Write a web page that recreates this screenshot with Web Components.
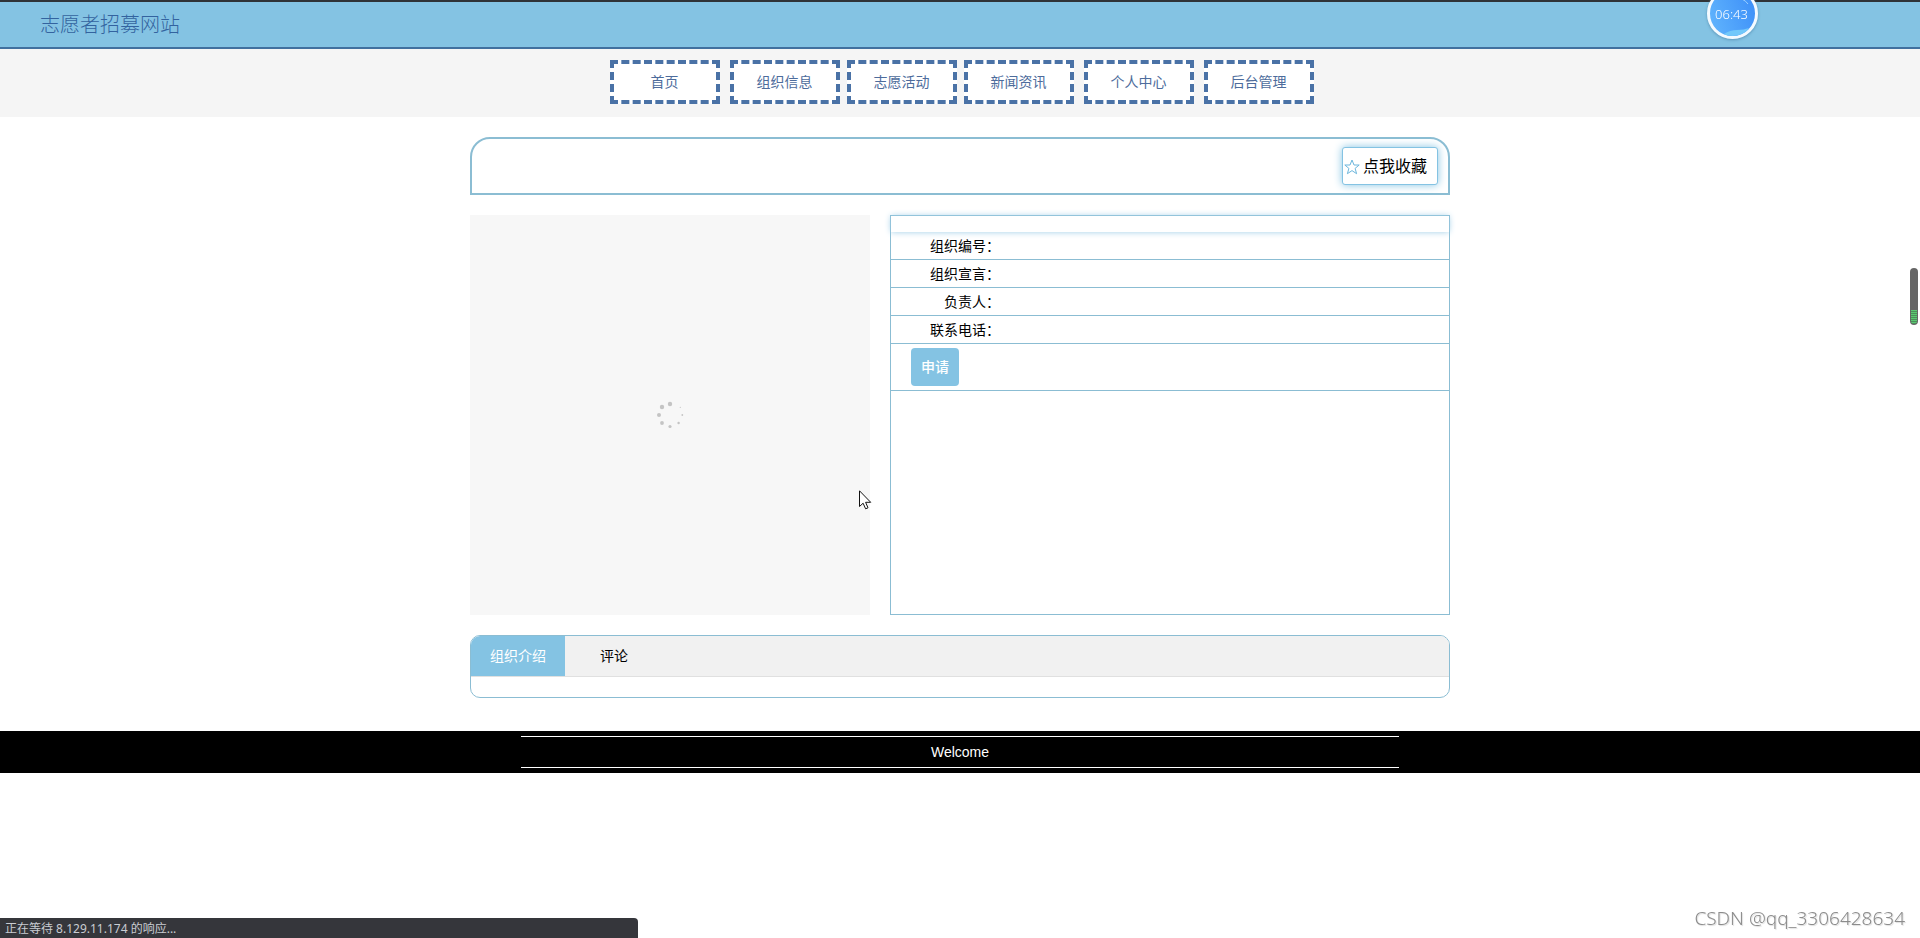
<!DOCTYPE html>
<html lang="zh-CN">
<head>
<meta charset="utf-8">
<title>志愿者招募网站</title>
<style>
  :root {
    --sky: #84c3e3;
    --navy: #4a72a6;
    --line: #8bbdd3;
    --glow: 0 0 8px #84c3e3;
  }
  body {
    margin: 0;
    background: #fff;
    color: #000;
    font: 14px/20px "Liberation Sans", "Noto Sans CJK SC", sans-serif;
  }
</style>
</head>
<body>
<volunteer-page></volunteer-page>

<script>
const define = (name, html) => {
  const template = document.createElement('template');
  template.innerHTML = html;
  customElements.define(name, class extends HTMLElement {
    constructor() {
      super();
      this.attachShadow({ mode: 'open' }).append(template.content.cloneNode(true));
    }
  });
};

define('site-header', `
  <style>
    :host { display: block; background: var(--sky); border-top: 2px solid #2f3337; border-bottom: 2px solid #41709f; padding: 1px 40px 0; }
    h1 { margin: 0; font-size: 20px; line-height: 44px; font-weight: 300; color: #33639f; }
  </style>
  <header><h1><slot></slot></h1></header>
`);

define('nav-link', `
  <style>
    :host { display: block; }
    a { display: block; box-sizing: border-box; width: 110px; line-height: 36px; border: 4px dashed var(--navy); background: #fff; color: #4d6c9c; text-align: center; text-decoration: none; }
  </style>
  <a href="#"><slot></slot></a>
`);

define('site-nav', `
  <style>
    :host { display: block; background: #f5f5f5; padding: 11px 0 13px; }
    nav { display: flex; justify-content: center; gap: 10px; padding-left: 3px; }
    .group { display: flex; gap: 7px; }
  </style>
  <nav>
    <nav-link>首页</nav-link>
    <div class="group">
      <nav-link>组织信息</nav-link>
      <nav-link>志愿活动</nav-link>
      <nav-link>新闻资讯</nav-link>
    </div>
    <nav-link>个人中心</nav-link>
    <nav-link>后台管理</nav-link>
  </nav>
`);

define('favorite-bar', `
  <style>
    :host { display: flex; justify-content: flex-end; padding: 8px 10px; border: 2px solid var(--line); border-radius: 20px 20px 0 0; }
    button { display: flex; align-items: center; gap: 3px; height: 38px; padding: 1px 10px 0 1px; background: #fff; border: 1px solid var(--sky); border-radius: 3px; box-shadow: var(--glow); font: inherit; font-size: 16px; color: #000; }
    svg { display: block; width: 16px; height: 16px; }
  </style>
  <button type="button">
    <svg viewBox="0 0 16 16" fill="none" stroke="#6cb6dc" stroke-linejoin="round" aria-hidden="true"><path d="M8 1l2 5h5.200l-4.100 3.400 1.500 5.300L8 11.600l-4.600 3.100 1.500-5.300L.8 6H6z"/></svg>
    <slot></slot>
  </button>
`);

define('loading-picture', `
  <style>
    :host { display: flex; align-items: center; justify-content: center; flex: none; width: 400px; height: 400px; background: #f7f7f7; }
    svg { width: 28px; height: 28px; }
  </style>
  <svg viewBox="0 0 28 28" fill="#c4c4c4" role="img" aria-label="加载中">
    <circle cx="14" cy="3" r="2.200"/><circle cx="6" cy="6" r="2.200"/>
    <circle cx="3" cy="14" r="2"/><circle cx="6" cy="22" r="1.900"/>
    <circle cx="14" cy="25.500" r="1.600"/><circle cx="22.600" cy="22" r="1.200"/>
    <circle cx="26.300" cy="14" r=".9"/><circle cx="24.300" cy="6.300" r=".6"/>
  </svg>
`);

define('info-row', `
  <style>
    :host { display: flex; border-bottom: 1px solid var(--line); }
    .label { width: 109px; padding-top: 1px; line-height: 26px; text-align: right; }
  </style>
  <div class="label"><slot></slot></div>
`);

define('organization-info', `
  <style>
    :host { display: block; flex: 1; border: 1px solid var(--line); }
    .title { height: 16px; box-shadow: 0 0 6px #9dcce6; }
    .actions { padding: 4px 20px; border-bottom: 1px solid var(--line); }
    button { display: block; height: 38px; padding: 0 10px; border: 0; border-radius: 4px; background: var(--sky); color: #fff; font: inherit; font-weight: 500; }
  </style>
  <div class="title"></div>
  <div>
    <info-row>组织编号：</info-row>
    <info-row>组织宣言：</info-row>
    <info-row>负责人：</info-row>
    <info-row>联系电话：</info-row>
    <div class="actions"><button type="button">申请</button></div>
  </div>
`);

define('detail-tabs', `
  <style>
    :host { display: block; border: 1px solid var(--line); border-radius: 10px; overflow: hidden; }
    .bar { display: flex; gap: 4px; background: #f1f1f1; border-bottom: 1px solid #e0e0e0; }
    button { min-width: 90px; height: 40px; padding: 0 19px; border: 0; background: none; font: inherit; color: #000; }
    [aria-selected="true"] { background: var(--sky); color: #fff; }
    .panel { height: 20px; }
  </style>
  <div class="bar" role="tablist">
    <button type="button" role="tab" aria-selected="true">组织介绍</button>
    <button type="button" role="tab" aria-selected="false">评论</button>
  </div>
  <div class="panel" role="tabpanel"></div>
`);

define('site-footer', `
  <style>
    :host { display: block; background: #000; padding: 5px 0; }
    footer { width: 878px; max-width: 100%; margin: 0 auto; border: solid #fff; border-width: 1px 0; line-height: 30px; text-align: center; color: #fff; }
  </style>
  <footer><slot></slot></footer>
`);

define('clock-badge', `
  <style>
    :host { position: fixed; top: -12px; right: 162px; box-sizing: border-box; width: 51px; height: 51px; border: 3px solid #f4faff; border-radius: 50%; overflow: hidden; box-shadow: 0 1px 3px #5b94b8; background: linear-gradient(70deg, #62b6fd, #3b8df8); color: #fff; font-family: "Noto Sans", sans-serif; }
    svg { position: absolute; inset: 0; width: 45px; height: 45px; }
    time { position: relative; display: block; padding-right: 2px; line-height: 46px; text-align: center; font-size: 13px; font-weight: 300; }
  </style>
  <svg viewBox="0 0 45 45" aria-hidden="true"><path d="M14 43q6-4 13-4t12-2l-6 8H14z" fill="#72c8fa"/><path d="M32 8q4 2 6 5" fill="none" stroke="#9bd0ff"/></svg>
  <time><slot></slot></time>
`);

define('battery-gauge', `
  <style>
    :host { position: fixed; top: 268px; right: 2px; box-sizing: border-box; width: 8px; height: 57px; padding: 42px 1px 1px; border-radius: 4px; background: #666; }
    div { height: 14px; border-radius: 0 0 3px 3px; background: repeating-linear-gradient(#5ac971 0 1px, #4c8f5b 1px 2px); }
  </style>
  <div></div>
`);

define('status-bubble', `
  <style>
    :host { position: fixed; left: 0; bottom: 0; box-sizing: border-box; width: 638px; max-width: 100%; padding: 1px 5px 0; border-radius: 0 4px 0 0; background: #35363b; color: #c9ccd2; font: 12px/19px "Noto Sans", "Noto Sans CJK SC", sans-serif; }
  </style>
  <slot></slot>
`);

define('water-mark', `
  <style>
    :host { position: fixed; right: 15px; bottom: 8px; font-size: 19px; line-height: 24px; font-family: "Noto Sans", sans-serif; font-weight: 300; color: #8c8c8c; text-shadow: 1px 1px 1px #ddd; }
  </style>
  <slot></slot>
`);

define('mouse-pointer', `
  <style>
    :host { position: absolute; top: 275px; left: 389px; }
    svg { display: block; width: 13px; height: 20px; }
  </style>
  <svg viewBox="0 0 13 20" aria-hidden="true"><path d="M.5.8v15.700l3.600-3.300 2.500 5.600 2.400-1-2.400-5.500h5.100z" fill="#fff" stroke="#111"/></svg>
`);

define('volunteer-page', `
  <style>
    :host { display: block; }
    main { display: grid; gap: 20px; width: 980px; max-width: 100%; margin: 20px auto 33px; }
    .summary { position: relative; display: flex; gap: 20px; }
  </style>
  <site-header>志愿者招募网站</site-header>
  <site-nav></site-nav>
  <main>
    <favorite-bar>点我收藏</favorite-bar>
    <div class="summary">
      <loading-picture></loading-picture>
      <organization-info></organization-info>
      <mouse-pointer></mouse-pointer>
    </div>
    <detail-tabs></detail-tabs>
  </main>
  <site-footer>Welcome</site-footer>
  <clock-badge>06:43</clock-badge>
  <battery-gauge></battery-gauge>
  <status-bubble>正在等待 8.129.11.174 的响应...</status-bubble>
  <water-mark>CSDN @qq_3306428634</water-mark>
`);
</script>
</body>
</html>
